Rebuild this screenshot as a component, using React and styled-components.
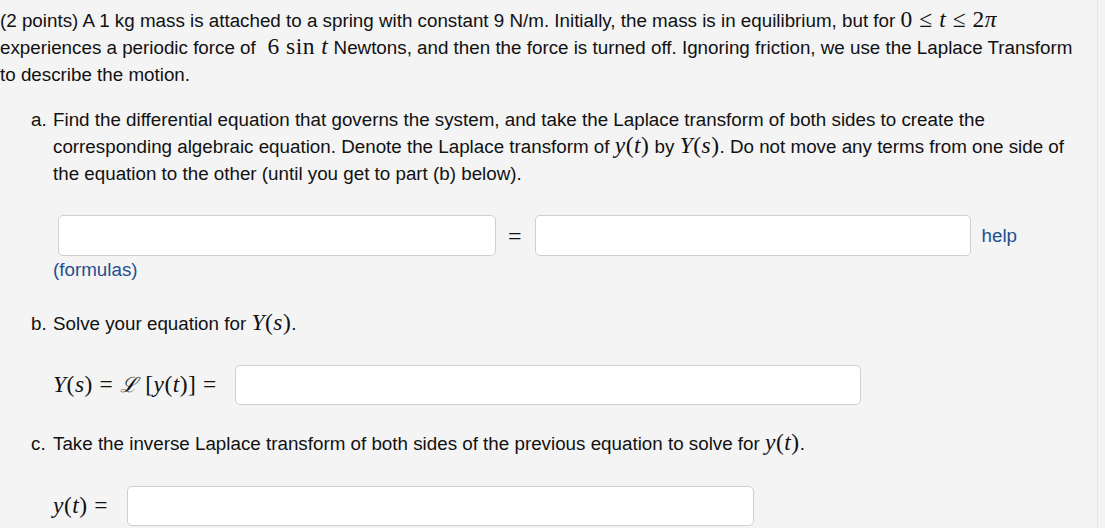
import React from "react";
import styled, { createGlobalStyle } from "styled-components";

const GlobalStyle = createGlobalStyle`
  html, body {
    margin: 0;
    padding: 0;
    background: #f4f4f4;
  }
  body {
    font-family: "Liberation Sans", Arial, sans-serif;
    color: #111;
  }
`;

const Page = styled.div`
  width: 1098px;
  min-height: 528px;
  box-sizing: border-box;
  padding-top: 7px;
  border-right: 1px solid #e6e6e6;
  font-size: 18.8px;
  line-height: 27px;
`;

const Intro = styled.p`
  margin: 0;
`;

const Parts = styled.div`
  display: flex;
  flex-direction: column;
  margin-top: 18px;
  padding-left: 31px;
`;

const Part = styled.div`
  display: grid;
  grid-template-columns: 22px 1fr;
  margin-top: ${(p) => p.$top ?? 0}px;
`;

const Label = styled.span``;

const Body = styled.div`
  display: flex;
  flex-direction: column;
`;

const Math = styled.span`
  font-family: "Liberation Serif", "Times New Roman", serif;
  font-size: 23.5px;
  line-height: 1;
  letter-spacing: 0.5px;
  white-space: nowrap;
`;

const V = styled.i`
  font-style: italic;
`;

const Rel = styled.span`
  margin: 0 6.5px;
`;

const Script = styled.span`
  font-family: "DejaVu Serif", serif;
  font-style: italic;
  font-size: 21px;
  margin-right: 8px;
`;

const AnswerRow = styled.div`
  display: flex;
  align-items: center;
  gap: ${(p) => p.$gap ?? 10}px;
  margin-top: ${(p) => p.$top ?? 27}px;
  padding-left: ${(p) => p.$indent ?? 0}px;
`;

const Field = styled.input`
  width: ${(p) => p.$w}px;
  height: ${(p) => p.$h ?? 41}px;
  box-sizing: border-box;
  margin: 0;
  border: 1px solid #cfcfcf;
  border-radius: 5px;
  background: #fff;
  padding: 4px 8px;
  font: inherit;
  outline: none;
`;

const Eq = styled.span`
  font-family: "Liberation Serif", serif;
  font-size: 24px;
  line-height: 1;
  margin: 0 ${(p) => p.$right ?? 0}px 0 ${(p) => p.$left ?? 0}px;
`;

const Link = styled.a`
  color: #1f4f8f;
  text-decoration: none;
  margin-left: ${(p) => p.$left ?? 0}px;
`;

const Formulas = styled(Link)`
  align-self: flex-start;
`;

export default function App() {
  return (
    <>
      <GlobalStyle />
      <Page>
        <Intro>
          (2 points) A 1 kg mass is attached to a spring with constant 9 N/m. Initially, the mass is in equilibrium, but for{" "}
          <Math>
            0<Rel>≤</Rel><V>t</V><Rel>≤</Rel>2<V>π</V>
          </Math>
          <br />
          experiences a periodic force of{" "}
          <Math>
            &nbsp;6 sin <V>t</V>
          </Math>{" "}
          Newtons, and then the force is turned off. Ignoring friction, we use the Laplace Transform
          <br />
          to describe the motion.
        </Intro>

        <Parts>
          <Part>
            <Label>a.</Label>
            <Body>
              <div>
                Find the differential equation that governs the system, and take the Laplace transform of both sides to create the
                <br />
                corresponding algebraic equation. Denote the Laplace transform of{" "}
                <Math>
                  <V>y</V>(<V>t</V>)
                </Math>{" "}
                by{" "}
                <Math>
                  <V>Y</V>(<V>s</V>)
                </Math>
                . Do not move any terms from one side of
                <br />
                the equation to the other (until you get to part (b) below).
              </div>
              <AnswerRow $indent={5} $gap={0} $top={28}>
                <Field $w={438} />
                <Eq $left={12} $right={13}>=</Eq>
                <Field $w={436} />
                <Link href="#" $left={11}>help</Link>
              </AnswerRow>
              <Formulas href="#">(formulas)</Formulas>
            </Body>
          </Part>

          <Part $top={27}>
            <Label>b.</Label>
            <Body>
              <div>
                Solve your equation for{" "}
                <Math>
                  <V>Y</V>(<V>s</V>)
                </Math>
                .
              </div>
              <AnswerRow $gap={12} $top={28}>
                <Math>
                  <V>Y</V>(<V>s</V>)<Rel>=</Rel><Script>ℒ</Script>[<V>y</V>(<V>t</V>)]<Rel>=</Rel>
                </Math>
                <Field $w={626} $h={40} />
              </AnswerRow>
            </Body>
          </Part>

          <Part $top={25}>
            <Label>c.</Label>
            <Body>
              <div>
                Take the inverse Laplace transform of both sides of the previous equation to solve for{" "}
                <Math>
                  <V>y</V>(<V>t</V>)
                </Math>
                .
              </div>
              <AnswerRow $gap={13} $top={29}>
                <Math>
                  <V>y</V>(<V>t</V>)<Rel>=</Rel>
                </Math>
                <Field $w={627} $h={40} />
              </AnswerRow>
            </Body>
          </Part>
        </Parts>
      </Page>
    </>
  );
}
